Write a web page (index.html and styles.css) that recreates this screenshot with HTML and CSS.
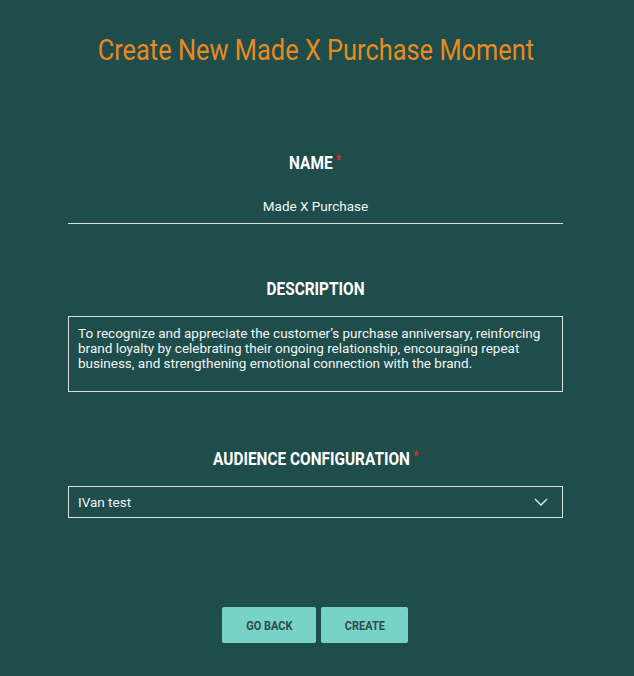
FILE: index.html
```html
<!DOCTYPE html>
<html lang="en">
<head>
<meta charset="UTF-8">
<meta name="viewport" content="width=device-width, initial-scale=1.0">
<title>Create Moment</title>
<link rel="stylesheet" href="styles.css">
</head>
<body>
<div class="page">
    <h1 class="title"><span>Create New Made X Purchase Moment</span></h1>

    <div class="field field-name">
        <label class="field-label"><span>NAME<sup class="req">*</sup></span></label>
        <div class="name-input">Made X Purchase</div>
    </div>

    <div class="field field-desc">
        <label class="field-label"><span>DESCRIPTION</span></label>
        <div class="desc-box">To recognize and appreciate the customer’s purchase anniversary, reinforcing brand loyalty by celebrating their ongoing relationship, encouraging repeat business, and strengthening emotional connection with the brand.</div>
    </div>

    <div class="field field-audience">
        <label class="field-label"><span>AUDIENCE CONFIGURATION<sup class="req">*</sup></span></label>
        <div class="select-box">
            <span>IVan test</span>
            <svg class="chevron" width="14" height="8" viewBox="0 0 14 8"><path d="M1 1 L7 7 L13 1" fill="none" stroke="#e6eeed" stroke-width="1.3"/></svg>
        </div>
    </div>

    <div class="btn-row">
        <button class="btn btn-back"><span>GO BACK</span></button>
        <button class="btn btn-create"><span>CREATE</span></button>
    </div>
</div>
</body>
</html>
```

FILE: styles.css
```css
html, body {
    margin: 0;
    padding: 0;
}
body {
    background-color: #1e4d4b;
    font-family: Roboto, 'Liberation Sans', sans-serif;
    color: #f2f5f4;
    height: 676px;
}
.page {
    width: 495px;
    margin-left: 68px;
    padding-top: 31px;
}
.title {
    margin: 0;
    display: flex;
    justify-content: center;
    font-size: 30px;
    font-weight: 400;
    color: #e88a1e;
    line-height: 38px;
    height: 38px;
}
.title span {
    display: inline-block;
    white-space: nowrap;
    transform: scaleX(0.846);
}
.field {
    display: flex;
    flex-direction: column;
}
.field-label {
    display: flex;
    justify-content: center;
    font-size: 19px;
    font-weight: 700;
    color: #ffffff;
    line-height: 20px;
    height: 20px;
}
.field-label > span {
    display: inline-block;
    white-space: nowrap;
    transform: scaleX(0.81);
}
.req {
    color: #e02a2a;
    font-size: 14px;
    line-height: 0;
    margin-left: 4px;
    position: relative;
    top: 3px;
}
.field-name {
    margin-top: 84px;
}
.name-input {
    margin-top: 24px;
    text-align: center;
    font-size: 13.5px;
    line-height: 18px;
    padding-bottom: 8px;
    border-bottom: 1px solid #d8e2e0;
}
.field-desc {
    margin-top: 55px;
}
.desc-box {
    margin-top: 17px;
    height: 76px;
    border: 1px solid #d8e2e0;
    padding: 9px 9px;
    box-sizing: border-box;
    font-size: 13.5px;
    line-height: 15px;
}
.field-audience {
    margin-top: 57px;
}
.select-box {
    margin-top: 17px;
    height: 32px;
    border: 1px solid #d8e2e0;
    box-sizing: border-box;
    padding: 0 14px 0 9px;
    display: flex;
    align-items: center;
    justify-content: space-between;
    font-size: 13.5px;
}
.btn-row {
    margin-top: 89px;
    margin-left: -1px;
    display: flex;
    justify-content: center;
    gap: 5px;
}
.btn {
    background-color: #76d3c6;
    color: #2f4b49;
    border: none;
    border-radius: 2px;
    height: 36px;
    padding: 0;
    font-family: Roboto, 'Liberation Sans', sans-serif;
    font-size: 12.5px;
    font-weight: 700;
}
.btn span {
    display: inline-block;
    transform: scaleX(0.88);
}
.btn-back {
    width: 94px;
}
.btn-create {
    width: 87px;
}
```
